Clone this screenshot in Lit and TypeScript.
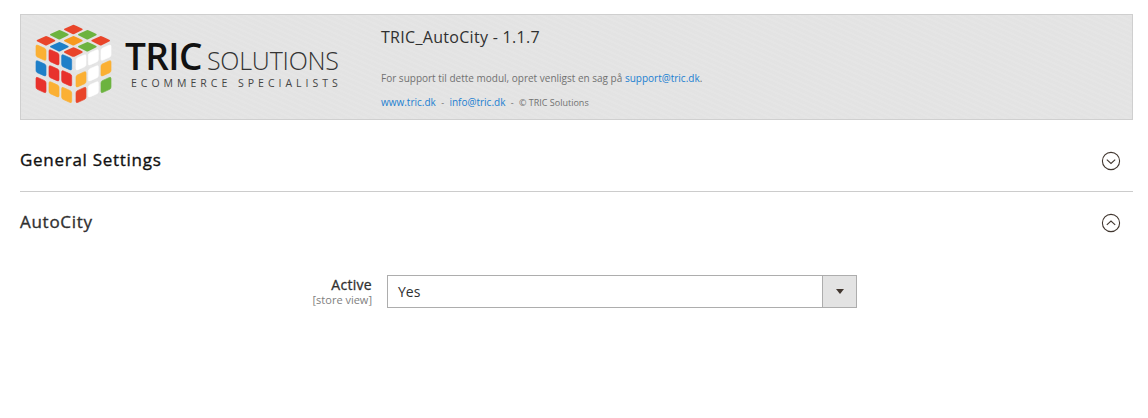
import { LitElement, html, css, svg } from "lit";
import { customElement } from "lit/decorators.js";

const R = "#e8322c", G = "#6cb33f", O = "#fbb034", B = "#1e7fc8", W = "#ffffff";
const topTiles: [number, number, string][] = [
  [130, 28, "#e9452a"], [88, 44, G], [172, 44, G], [48, 62, "#e9452a"], [130, 62, "#f79a1e"], [212, 62, "#e9452a"], [88, 80, B], [172, 80, G], [130, 96, "#e9452a"],
];
const leftTiles: [number, number, string][] = [
  [33, 98, O], [72, 112, R], [110, 127, B], [33, 145, B], [72, 160, R], [110, 175, R], [33, 195, R], [72, 208, O], [110, 225, O],
];
const rightTiles: [number, number, string][] = [
  [153, 127, W], [190, 112, W], [228, 98, W], [153, 178, O], [190, 160, W], [228, 145, O], [153, 225, "#e9452a"], [190, 208, W], [228, 195, G],
];

const cube = html`<svg class="cube" viewBox="0 0 270 270" aria-hidden="true">
  ${topTiles.map(([x, y, c]) => svg`<path d="M${x} ${y - 14}Q${x + 3} ${y - 14} ${x + 27} ${y - 2}Q${x + 29} ${y} ${x + 27} ${y + 2}L${x + 3} ${y + 14}Q${x} ${y + 15} ${x - 3} ${y + 14}L${x - 27} ${y + 2}Q${x - 29} ${y} ${x - 27} ${y - 2}Z" fill="${c}"/>`)}
  ${leftTiles.map(([x, y, c]) => svg`<path d="M${x - 15} ${y - 19}Q${x - 15} ${y - 25} ${x - 9} ${y - 22}L${x + 11} ${y - 13}Q${x + 15} ${y - 11} ${x + 15} ${y - 6}L${x + 15} ${y + 19}Q${x + 15} ${y + 25} ${x + 9} ${y + 22}L${x - 11} ${y + 13}Q${x - 15} ${y + 11} ${x - 15} ${y + 6}Z" fill="${c}" stroke="${c}" stroke-width="2"/>`)}
  ${rightTiles.map(([x, y, c]) => svg`<path d="M${x + 15} ${y - 19}Q${x + 15} ${y - 25} ${x + 9} ${y - 22}L${x - 11} ${y - 13}Q${x - 15} ${y - 11} ${x - 15} ${y - 6}L${x - 15} ${y + 19}Q${x - 15} ${y + 25} ${x - 9} ${y + 22}L${x + 11} ${y + 13}Q${x + 15} ${y + 11} ${x + 15} ${y + 6}Z" fill="${c}" stroke="${c}" stroke-width="2"/>`)}
</svg>`;

const chevron = (up: boolean) => html`<svg class="toggle" viewBox="0 0 20 20" aria-hidden="true">
  <circle cx="10" cy="10" r="8.6" fill="none" stroke="#41362f" stroke-width="1.1"/>
  <path d="${up ? "M5.8 11.8 10 8l4.2 3.8" : "M5.8 8.6 10 12.4l4.2-3.8"}" fill="none" stroke="#41362f" stroke-width="1.1"/>
</svg>`;

@customElement("app-root")
export class AppRoot extends LitElement {
  static styles = css`
    :host {
      display: block;
      box-sizing: border-box;
      width: 1148px;
      height: 418px;
      padding: 14px 15px 0 20px;
      background: #fff;
      font-family: "Open Sans", sans-serif;
      color: #303030;
      overflow: hidden;
    }
    .banner {
      display: flex;
      box-sizing: border-box;
      height: 106px;
      background-color: #e4e4e4;
      background-image: repeating-linear-gradient(
        24deg,
        rgba(255, 255, 255, 0.05) 0 2px,
        rgba(0, 0, 0, 0.004) 2px 5px
      );
      border: 1px solid #cfcfcf;
    }
    .logo {
      display: flex;
      width: 360px;
      flex: none;
    }
    .cube {
      width: 90px;
      height: 90px;
      margin: 5px 0 0 9px;
      flex: none;
    }
    .wordmark {
      margin: 22px 0 0 5px;
      color: #111;
    }
    .brand {
      display: flex;
      align-items: baseline;
      height: 38px;
      line-height: 38px;
      white-space: nowrap;
    }
    .tric {
      font-size: 37px;
      font-weight: 600;
      letter-spacing: -0.6px;
    }
    .solutions {
      font-size: 25px;
      font-weight: 300;
      margin-left: 5px;
      color: #333;
      letter-spacing: -0.2px;
    }
    .tagline {
      margin: 1px 0 0 6px;
      font-size: 10.5px;
      line-height: 14px;
      letter-spacing: 4px;
      color: #444;
      white-space: nowrap;
    }
    .info {
      padding-top: 11px;
    }
    .info h1 {
      margin: 0;
      font-size: 16px;
      letter-spacing: 0.3px;
      line-height: 22px;
      font-weight: 400;
      color: #303030;
    }
    .info p {
      margin: 0;
      font-size: 9px;
      line-height: 14px;
      color: #717171;
      white-space: nowrap;
    }
    .info .support {
      padding-top: 23px;
      font-size: 10px;
    }
    .links {
      padding-top: 10px;
    }
    .sep {
      margin: 0 3px;
    }
    a {
      color: #1b7fd1;
      text-decoration: none;
    }
    .links a {
      font-size: 10px;
    }
    .section {
      display: flex;
      justify-content: space-between;
      align-items: center;
      box-sizing: border-box;
      height: 72px;
      padding: 9px 12px 0 0;
      border-bottom: 1px solid #cccccc;
    }
    .section.open {
      height: 60px;
      padding: 0 12px 0 0;
      border-bottom: none;
    }
    h2 {
      margin: 0;
      font-size: 17px;
      line-height: 24px;
      font-weight: 400;
      letter-spacing: 0.72px;
      -webkit-text-stroke: 0.35px currentColor;
      color: #111;
    }
    .open h2 {
      color: #303030;
    }
    .toggle {
      width: 20px;
      height: 20px;
      display: block;
      margin-top: 2px;
    }
    .field {
      display: flex;
      margin-top: 23px;
    }
    .label {
      box-sizing: border-box;
      width: 352px;
      text-align: right;
      padding-top: 1px;
    }
    .label strong {
      display: block;
      font-size: 14px;
      line-height: 17px;
      font-weight: 400;
      letter-spacing: 0.3px;
      -webkit-text-stroke: 0.3px currentColor;
      color: #303030;
    }
    .label span {
      display: block;
      font-size: 11px;
      line-height: 13px;
      color: #808080;
    }
    .select {
      display: flex;
      box-sizing: border-box;
      width: 470px;
      height: 33px;
      margin-left: 15px;
      border: 1px solid #adadad;
    }
    .value {
      flex: 1;
      padding-left: 10px;
      font-size: 14px;
      line-height: 31px;
      color: #303030;
    }
    .arrow {
      display: flex;
      align-items: center;
      justify-content: center;
      width: 33px;
      background: #e3e3e3;
      border-left: 1px solid #adadad;
    }
    .arrow i {
      width: 0;
      height: 0;
      border-left: 4.5px solid transparent;
      border-right: 4.5px solid transparent;
      border-top: 5px solid #41362f;
    }
  `;

  render() {
    return html`
      <div class="banner">
        <div class="logo">
          ${cube}
          <div class="wordmark">
            <div class="brand"><span class="tric">TRIC</span><span class="solutions">SOLUTIONS</span></div>
            <div class="tagline">ECOMMERCE SPECIALISTS</div>
          </div>
        </div>
        <div class="info">
          <h1>TRIC_AutoCity - 1.1.7</h1>
          <p class="support">For support til dette modul, opret venligst en sag på <a href="#">support@tric.dk</a>.</p>
          <p class="links"><a href="#">www.tric.dk</a><span class="sep"> - </span><a href="#">info@tric.dk</a><span class="sep"> - </span>© TRIC Solutions</p>
        </div>
      </div>
      <div class="section"><h2>General Settings</h2>${chevron(false)}</div>
      <div class="section open"><h2>AutoCity</h2>${chevron(true)}</div>
      <div class="field">
        <div class="label"><strong>Active</strong><span>[store view]</span></div>
        <div class="select">
          <div class="value">Yes</div>
          <div class="arrow"><i></i></div>
        </div>
      </div>
    `;
  }
}
